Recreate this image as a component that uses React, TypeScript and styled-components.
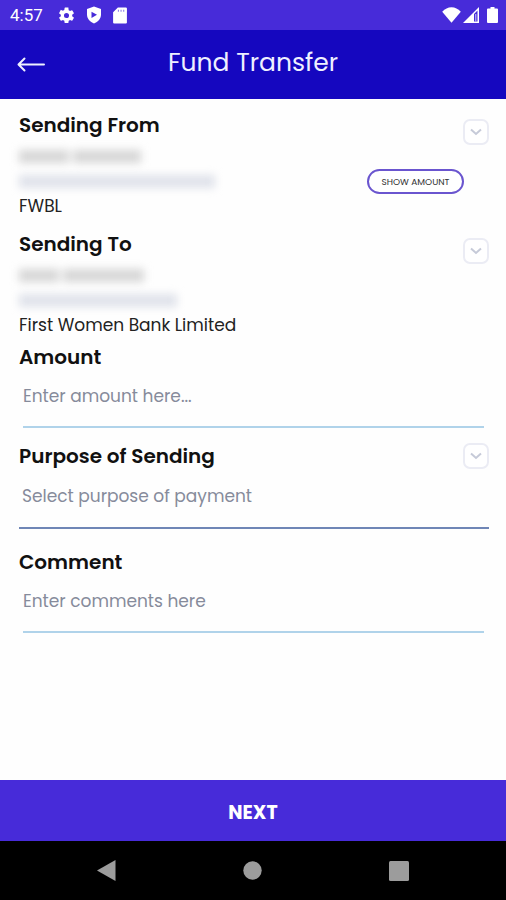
import React, { useRef } from "react";
import styled, { createGlobalStyle } from "styled-components";

const GlobalStyle = createGlobalStyle`
  *, *::before, *::after { box-sizing: border-box; }
  body {
    margin: 0;
    background: #fefefe;
    color: #222;
    font-family: Poppins, Inter, "Open Sans", sans-serif;
  }
  button, input, select { font-family: inherit; }
`;

const Screen = styled.div`
  display: flex;
  flex-direction: column;
  min-height: 100vh;
`;

const StatusBar = styled.div`
  display: flex;
  align-items: center;
  justify-content: space-between;
  height: 30px;
  padding: 0 8px 0 10px;
  background: #472bd9;
  color: #fff;
`;

const StatusGroup = styled.div<{ $gap: number }>`
  display: flex;
  align-items: center;
  gap: ${(p) => p.$gap}px;
`;

const Clock = styled.span`
  margin-right: 4px;
  font-family: Roboto, sans-serif;
  font-size: 17px;
  line-height: 20px;
`;

const Header = styled.header`
  display: grid;
  grid-template-columns: 44px 1fr 44px;
  align-items: center;
  height: 69px;
  padding: 0 9px;
  background: #1507bf;
  color: #eef0ff;
`;

const BackButton = styled.button`
  display: flex;
  align-items: center;
  justify-content: center;
  height: 44px;
  padding: 0;
  border: 0;
  background: none;
  color: inherit;
`;

const Title = styled.h1`
  margin: 0;
  padding-bottom: 4px;
  font-size: 25px;
  font-weight: 400;
  line-height: 36px;
  text-align: center;
`;

const Form = styled.form`
  flex: 1;
  display: flex;
  flex-direction: column;
`;

const Fields = styled.div`
  flex: 1;
  padding: 11px 17px 24px 19px;
`;

const Section = styled.section<{ $after: number }>`
  margin-bottom: ${(p) => p.$after}px;
`;

const HeadingRow = styled.div`
  display: flex;
  align-items: center;
  justify-content: space-between;
  height: 30px;
`;

const Heading = styled.h2`
  margin: 0;
  font-size: 20px;
  font-weight: 600;
  line-height: 30px;
  color: #111;
`;

const Toggle = styled.button<{ $drop?: boolean }>`
  display: flex;
  align-items: center;
  justify-content: center;
  width: 26px;
  height: 26px;
  margin-top: ${(p) => (p.$drop ? 14 : 0)}px;
  padding: 0;
  border: 2px solid #ebecf4;
  border-radius: 7px;
  background: #fff;
  color: #c6cad8;
`;

const Account = styled.div`
  display: grid;
  grid-template-columns: 1fr auto;
  grid-auto-rows: 25px;
  align-items: center;
  margin-top: 4px;
`;

const Masked = styled.div`
  grid-column: 1;
  display: flex;
  gap: 4px;
  filter: blur(4px);
`;

const MaskedWord = styled.span<{ $width: number; $cool?: boolean }>`
  width: ${(p) => p.$width}px;
  height: 13px;
  background: ${(p) => (p.$cool ? "#dfe2ea" : "#d6d6d6")};
`;

const Bank = styled.p`
  grid-column: 1 / -1;
  margin: 0;
  font-size: 17px;
  line-height: 25px;
`;

const ShowAmount = styled.button`
  grid-column: 2;
  width: 97px;
  height: 25px;
  margin-right: 25px;
  padding: 0;
  border: 2px solid #6a55cf;
  border-radius: 13px;
  background: #fff;
  color: #333;
  font-size: 9px;
  line-height: 20px;
  white-space: nowrap;
`;

const TextField = styled.input`
  display: block;
  width: calc(100% - 9px);
  height: 56px;
  margin: 0 5px 0 4px;
  padding: 0 0 7px;
  border: 0;
  border-bottom: 2px solid #b0d3ea;
  border-radius: 0;
  background: transparent;
  color: #141414;
  font-size: 17px;
  outline: none;
  &::placeholder { color: #868b9b; opacity: 1; }
`;

const SelectField = styled.select`
  display: block;
  width: 100%;
  height: 58px;
  padding: 0 0 7px 3px;
  border: 0;
  border-bottom: 2px solid #6f86b6;
  border-radius: 0;
  appearance: none;
  background: transparent;
  color: #868b9b;
  font-size: 17px;
  outline: none;
`;

const NextButton = styled.button`
  height: 61px;
  padding: 4px 0 0;
  border: 0;
  background: #472bd9;
  color: #fff;
  font-size: 19px;
  font-weight: 700;
`;

const NavBar = styled.nav`
  display: flex;
  align-items: center;
  justify-content: space-around;
  height: 59px;
  padding: 0 33px;
  background: #000;
`;

const NavButton = styled.button`
  display: flex;
  padding: 8px;
  border: 0;
  background: none;
  color: #9c9c9c;
`;

const Chevron = () => (
  <svg width="12" height="8" viewBox="0 0 12 8" fill="none" stroke="currentColor" strokeWidth="2">
    <path d="M1 1.500 6 6l5-4.500" />
  </svg>
);

const Gear = () => (
  <svg width="19" height="19" viewBox="0 0 24 24" fill="currentColor">
    <path d="M19.14 12.94c.04-.3.06-.61.06-.94s-.02-.64-.07-.94l2.03-1.58a.49.49 0 0 0 .12-.61l-1.92-3.32a.49.49 0 0 0-.59-.22l-2.39.96a7 7 0 0 0-1.62-.94l-.36-2.54A.48.48 0 0 0 13.92 2h-3.84a.48.48 0 0 0-.47.41l-.36 2.54c-.59.24-1.13.57-1.62.94l-2.39-.96a.48.48 0 0 0-.59.22L2.74 8.87a.48.48 0 0 0 .12.61l2.03 1.58a6 6 0 0 0 0 1.88l-2.03 1.58a.49.49 0 0 0-.12.61l1.92 3.32c.12.22.37.29.59.22l2.39-.96c.5.38 1.03.7 1.62.94l.36 2.54c.05.24.24.41.48.41h3.84c.24 0 .44-.17.47-.41l.36-2.54a7 7 0 0 0 1.62-.94l2.39.96c.22.08.47 0 .59-.22l1.92-3.32a.48.48 0 0 0-.12-.61zM12 15.2a3.2 3.2 0 1 1 0-6.4 3.2 3.2 0 0 1 0 6.4z" />
  </svg>
);

const Shield = () => (
  <svg width="16" height="18" viewBox="0 0 16 18">
    <path d="M8 .5 15 3v5.500c0 4-3 7.500-7 9-4-1.500-7-5-7-9V3z" fill="currentColor" />
    <path d="m5.500 5.700 5.500 3.100-5.500 3.100z" fill="#472bd9" />
  </svg>
);

const SdCard = () => (
  <svg width="16" height="17" viewBox="0 0 14 16">
    <path d="M5 .5h7.500a1 1 0 0 1 1 1v13a1 1 0 0 1-1 1h-11a1 1 0 0 1-1-1V5z" fill="currentColor" />
    <path d="M5.500 2.500v2M8 2.500v2M10.500 2.500v2" stroke="#8b7ae8" />
  </svg>
);

const Wifi = () => (
  <svg width="19" height="16" viewBox="0 0 19 16" fill="currentColor">
    <path d="M9.500 15.800.2 4.800C3 2 6 .3 9.500.3s6.500 1.700 9.300 4.500z" />
  </svg>
);

const Signal = () => (
  <svg width="16" height="16" viewBox="0 0 16 16">
    <path d="M0 16 16 0v16z" fill="currentColor" />
    <path d="M11 7v7.500h3.500V3.500z" fill="#472bd9" />
    <path d="M12.800 7v7.500" stroke="#d5cff7" />
  </svg>
);

const Battery = () => (
  <svg width="11" height="16" viewBox="0 0 11 16" fill="currentColor">
    <path d="M3.500 0h4v1.500H10a1 1 0 0 1 1 1V15a1 1 0 0 1-1 1H1a1 1 0 0 1-1-1V2.500a1 1 0 0 1 1-1h2.500z" />
  </svg>
);

const BackArrow = () => (
  <svg width="28" height="15" viewBox="0 0 28 15" fill="none" stroke="currentColor" strokeWidth="2" strokeLinecap="round" strokeLinejoin="round">
    <path d="M27 7.500H2M7.500 1.500l-6 6 6 6" />
  </svg>
);

export default function App() {
  const purpose = useRef<HTMLSelectElement>(null);

  return (
    <Screen>
      <GlobalStyle />
      <StatusBar>
        <StatusGroup $gap={10}>
          <Clock>4:57</Clock>
          <Gear />
          <Shield />
          <SdCard />
        </StatusGroup>
        <StatusGroup $gap={2}>
          <Wifi />
          <StatusGroup $gap={8}>
            <Signal />
            <Battery />
          </StatusGroup>
        </StatusGroup>
      </StatusBar>

      <Header>
        <BackButton type="button" aria-label="Back">
          <BackArrow />
        </BackButton>
        <Title>Fund Transfer</Title>
      </Header>

      <Form onSubmit={(e) => e.preventDefault()}>
        <Fields>
          <Section $after={10}>
            <HeadingRow>
              <Heading>Sending From</Heading>
              <Toggle type="button" $drop aria-label="Choose sending account">
                <Chevron />
              </Toggle>
            </HeadingRow>
            <Account>
              <Masked>
                <MaskedWord $width={50} />
                <MaskedWord $width={68} />
              </Masked>
              <Masked>
                <MaskedWord $width={196} $cool />
              </Masked>
              <ShowAmount type="button">SHOW AMOUNT</ShowAmount>
              <Bank>FWBL</Bank>
            </Account>
          </Section>

          <Section $after={4}>
            <HeadingRow>
              <Heading>Sending To</Heading>
              <Toggle type="button" $drop aria-label="Choose receiving account">
                <Chevron />
              </Toggle>
            </HeadingRow>
            <Account>
              <Masked>
                <MaskedWord $width={40} />
                <MaskedWord $width={81} />
              </Masked>
              <Masked>
                <MaskedWord $width={158} $cool />
              </Masked>
              <Bank>First Women Bank Limited</Bank>
            </Account>
          </Section>

          <Section $after={13}>
            <Heading as="label" htmlFor="amount">Amount</Heading>
            <TextField id="amount" inputMode="decimal" placeholder="Enter amount here..." />
          </Section>

          <Section $after={18}>
            <HeadingRow>
              <Heading as="label" htmlFor="purpose">Purpose of Sending</Heading>
              <Toggle
                type="button"
                aria-label="Choose purpose"
                onClick={() => purpose.current?.showPicker()}
              >
                <Chevron />
              </Toggle>
            </HeadingRow>
            <SelectField id="purpose" ref={purpose} defaultValue="">
              <option value="">Select purpose of payment</option>
            </SelectField>
          </Section>

          <Section $after={0}>
            <Heading as="label" htmlFor="comment">Comment</Heading>
            <TextField id="comment" placeholder="Enter comments here" />
          </Section>
        </Fields>
        <NextButton type="submit">NEXT</NextButton>
      </Form>

      <NavBar aria-label="System">
        <NavButton type="button" aria-label="Back">
          <svg width="19" height="21" viewBox="0 0 19 21" fill="currentColor"><path d="M18.500 0v21L0 10.500z" /></svg>
        </NavButton>
        <NavButton type="button" aria-label="Home">
          <svg width="19" height="19" viewBox="0 0 19 19" fill="currentColor"><circle cx="9.500" cy="9.500" r="9.200" /></svg>
        </NavButton>
        <NavButton type="button" aria-label="Recent apps">
          <svg width="20" height="20" viewBox="0 0 20 20" fill="currentColor"><rect width="20" height="20" rx="1.500" /></svg>
        </NavButton>
      </NavBar>
    </Screen>
  );
}
